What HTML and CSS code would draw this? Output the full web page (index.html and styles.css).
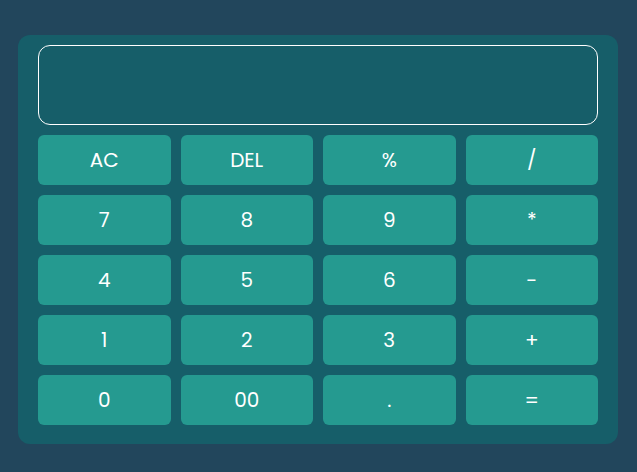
FILE: index.html
```html
<!DOCTYPE html>
<html>
<head>
<meta charset="utf-8">
<link rel="stylesheet" href="styles.css">
</head>
<body>
<div class="calc">
  <div class="display"></div>
  <div class="keys">
    <button class="key">AC</button>
    <button class="key">DEL</button>
    <button class="key">%</button>
    <button class="key">/</button>
    <button class="key">7</button>
    <button class="key">8</button>
    <button class="key">9</button>
    <button class="key">*</button>
    <button class="key">4</button>
    <button class="key">5</button>
    <button class="key">6</button>
    <button class="key">-</button>
    <button class="key">1</button>
    <button class="key">2</button>
    <button class="key">3</button>
    <button class="key">+</button>
    <button class="key">0</button>
    <button class="key">00</button>
    <button class="key">.</button>
    <button class="key">=</button>
  </div>
</div>
</body>
</html>
```
FILE: styles.css
```css
html, body {
  margin: 0;
  padding: 0;
  background: #22465c;
  height: 100%;
}
body {
  padding: 35px 19px 0 18px;
  box-sizing: border-box;
  font-family: "Poppins", "Lato", "Open Sans", sans-serif;
}
.calc {
  width: 600px;
  box-sizing: border-box;
  background: #165e69;
  border-radius: 12px;
  padding: 10px 20px 19px 20px;
  display: flex;
  flex-direction: column;
  gap: 10px;
}
.display {
  height: 80px;
  box-sizing: border-box;
  border: 1px solid #ffffff;
  border-radius: 12px;
  background: #165e69;
}
.keys {
  display: grid;
  grid-template-columns: repeat(4, 1fr);
  grid-auto-rows: 50px;
  gap: 10px;
}
.key {
  border: none;
  border-radius: 6px;
  background: #259a90;
  color: #ffffff;
  font-family: inherit;
  font-size: 20px;
  padding: 0;
}
```
